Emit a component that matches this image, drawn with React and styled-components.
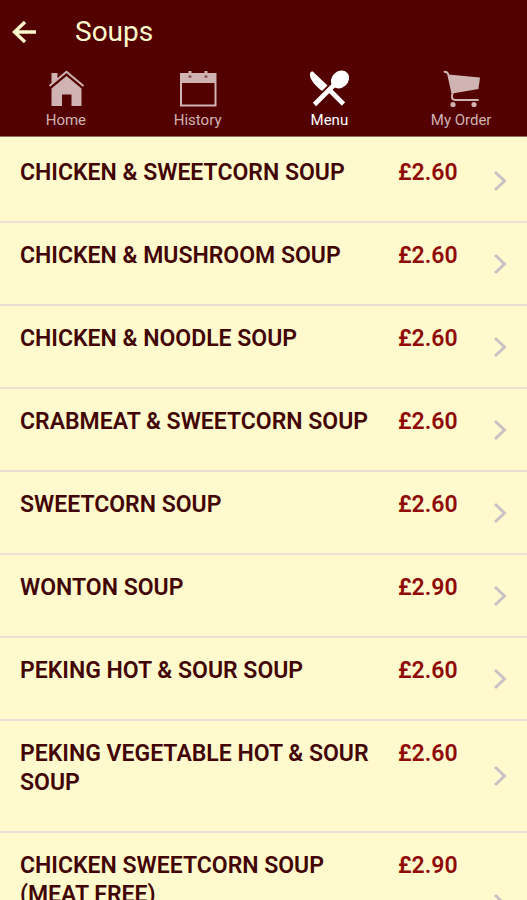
import React from "react";
import styled, { createGlobalStyle } from "styled-components";

const GlobalStyle = createGlobalStyle`
  * {
    box-sizing: border-box;
  }
  body {
    margin: 0;
    background-color: #fffacd;
    font-family: Roboto, "Liberation Sans", sans-serif;
  }
`;

const Screen = styled.div`
  display: flex;
  flex-direction: column;
  height: 100vh;
`;

const Header = styled.header`
  flex: none;
  background-color: #520000;
  border-bottom: 1px solid #9b6a62;
`;

const TitleBar = styled.div`
  display: flex;
  align-items: center;
  gap: 39px;
  height: 64px;
  padding-left: 12px;
`;

const BackButton = styled.button`
  display: flex;
  padding: 0;
  border: 0;
  background: none;
  color: #fffacd;
  cursor: pointer;
`;

const Title = styled.h1`
  margin: 0;
  color: #fffacd;
  font-size: 28px;
  font-weight: 400;
  line-height: 32px;
`;

const Tabs = styled.nav`
  display: grid;
  grid-template-columns: repeat(4, 1fr);
  height: 72px;
  padding-top: 5px;
`;

const Tab = styled.a`
  display: flex;
  flex-direction: column;
  align-items: center;
  gap: 1px;
  color: ${(props) => (props.$active ? "#ffffff" : "#d0b3b3")};
  font-size: 15px;
  line-height: 20px;
  text-decoration: none;
`;

const List = styled.ul`
  flex: 1;
  min-height: 0;
  margin: 0;
  padding: 3px 0 0;
  overflow-y: auto;
  scrollbar-width: none;
  list-style: none;
`;

const Item = styled.a`
  display: flex;
  align-items: center;
  min-height: ${(props) => (props.$tall ? "144px" : "83px")};
  padding: 0 20px;
  border-bottom: 2px solid #e9e1d8;
  font-size: 23px;
  font-weight: 600;
  line-height: 29px;
  text-decoration: none;
`;

const Name = styled.span`
  flex: 1;
  align-self: flex-start;
  padding: 18px 16px 34px 0;
  color: #420404;
`;

const Price = styled.span`
  align-self: flex-start;
  width: 95px;
  padding-top: 18px;
  color: #8f0a06;
`;

const Chevron = styled.svg`
  flex: none;
  width: 14px;
  height: 22px;
`;

const BackIcon = () => (
  <svg width="24" height="24" viewBox="0 0 24 24" aria-hidden="true">
    <path
      d="M24 12H3M13 2L2.5 12L13 22"
      fill="none"
      stroke="currentColor"
      strokeWidth="3.4"
    />
  </svg>
);

const HomeIcon = () => (
  <svg width="40" height="40" viewBox="0 0 40 40" fill="currentColor">
    <path d="M5.500 4h6v5.500L5.500 15z" />
    <path d="M20.500 7L35.500 19.500V37H25.500V25.500H16V37H5.500V19.500z" />
    <path
      d="M3.500 17L20.500 2.800L37.500 17"
      fill="none"
      stroke="currentColor"
      strokeWidth="2"
    />
  </svg>
);

const HistoryIcon = () => (
  <svg width="40" height="40" viewBox="0 0 40 40" fill="currentColor">
    <path
      fillRule="evenodd"
      d="M2 4H38.500V37.500H2zM4 14V35.500H36.500V14z"
    />
    <path d="M10.500 2h3v4h-3zM26.500 2h3v4h-3z" />
    <circle cx="12" cy="7.500" r="1.600" fill="#8a5757" />
    <circle cx="28" cy="7.500" r="1.600" fill="#8a5757" />
  </svg>
);

const MenuIcon = () => (
  <svg width="40" height="40" viewBox="0 0 40 40" fill="currentColor">
    <path d="M3.500 2.200L18.500 16.500L13 22C6.500 17-0.500 9.500 1.200 4Q1.800 2.200 3.500 2.200z" />
    <ellipse
      cx="31"
      cy="10.500"
      rx="9.800"
      ry="8.200"
      transform="rotate(-42 31 10.500)"
    />
    <path
      d="M25 16L5.500 35.500M19 19.500L34.500 35"
      fill="none"
      stroke="currentColor"
      strokeWidth="4.600"
    />
  </svg>
);

const CartIcon = () => (
  <svg width="40" height="40" viewBox="0 0 40 40" fill="currentColor">
    <path d="M7.500 5.500L39 8.500L37.500 20L11.500 24.500z" />
    <path
      d="M3.500 2.800Q6.500 2.800 7.300 5.500L11.500 24.500Q9.500 30.500 14 31H37"
      fill="none"
      stroke="currentColor"
      strokeWidth="2"
      strokeLinecap="round"
    />
    <circle cx="12" cy="35.500" r="2.600" />
    <circle cx="33" cy="35.500" r="2.600" />
  </svg>
);

const tabs = [
  { label: "Home", Icon: HomeIcon },
  { label: "History", Icon: HistoryIcon },
  { label: "Menu", Icon: MenuIcon, active: true },
  { label: "My Order", Icon: CartIcon },
];

const soups = [
  { name: "CHICKEN & SWEETCORN SOUP", price: "£2.60" },
  { name: "CHICKEN & MUSHROOM SOUP", price: "£2.60" },
  { name: "CHICKEN & NOODLE SOUP", price: "£2.60" },
  { name: "CRABMEAT & SWEETCORN SOUP", price: "£2.60" },
  { name: "SWEETCORN SOUP", price: "£2.60" },
  { name: "WONTON SOUP", price: "£2.90" },
  { name: "PEKING HOT & SOUR SOUP", price: "£2.60" },
  { name: "PEKING VEGETABLE HOT & SOUR SOUP", price: "£2.60" },
  { name: "CHICKEN SWEETCORN SOUP (MEAT FREE)", price: "£2.90", tall: true },
];

export default function App() {
  return (
    <Screen>
      <GlobalStyle />
      <Header>
        <TitleBar>
          <BackButton type="button" aria-label="Back">
            <BackIcon />
          </BackButton>
          <Title>Soups</Title>
        </TitleBar>
        <Tabs>
          {tabs.map(({ label, Icon, active }) => (
            <Tab
              key={label}
              href="#"
              $active={active}
              aria-current={active ? "page" : undefined}
            >
              <Icon />
              {label}
            </Tab>
          ))}
        </Tabs>
      </Header>
      <List>
        {soups.map((soup) => (
          <li key={soup.name}>
            <Item href="#" $tall={soup.tall}>
              <Name>{soup.name}</Name>
              <Price>{soup.price}</Price>
              <Chevron viewBox="0 0 14 22" aria-hidden="true">
                <path
                  d="M2 2L11.500 11L2 20"
                  fill="none"
                  stroke="#c9c2c4"
                  strokeWidth="3"
                />
              </Chevron>
            </Item>
          </li>
        ))}
      </List>
    </Screen>
  );
}
